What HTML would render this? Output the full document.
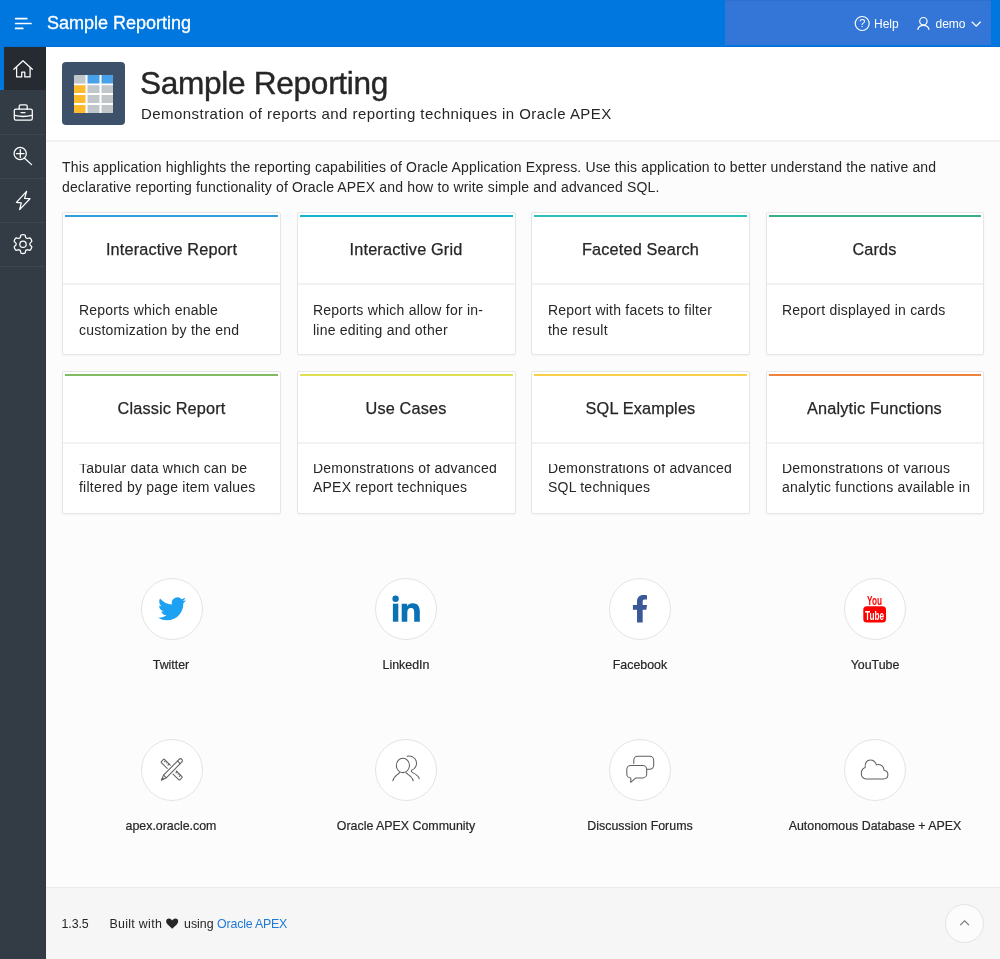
<!DOCTYPE html>
<html><head><meta charset="utf-8">
<style>
*{box-sizing:border-box;margin:0;padding:0}
html,body{width:1000px;height:959px;overflow:hidden}
#wrap{position:absolute;left:0;top:0;width:1000px;height:959px;will-change:transform}
body{position:relative;font-family:"Liberation Sans",sans-serif;background:#fcfcfc;color:#262626}
.abs{position:absolute}
#hdr{left:0;top:0;width:1000px;height:47px;background:#0076df}
#hdr .line{left:0;top:46px;width:1000px;height:1px;background:#006fd6}
#htitle{left:47px;top:12px;font-size:18px;line-height:22px;color:#fff;white-space:nowrap;-webkit-text-stroke:0.3px #fff}
#navbox{left:725px;top:0;width:266px;height:45px;background:#3476d8}
#navbox .top{left:0;top:0;width:266px;height:1px;background:#2f6fcc}
.nt{font-size:12px;line-height:14px;color:#fff;white-space:nowrap}
#side{left:0;top:47px;width:46px;height:912px;background:#333c45}
#side .it{position:absolute;left:0;width:45px;height:44px;border-bottom:1px solid #3e4751}
#side .edge{position:absolute;left:45px;top:43px;width:1px;height:869px;background:#2f373f}
#hero{left:46px;top:47px;width:954px;height:95px;background:#fff;border-bottom:2px solid #f0f0f0}
#hicon{left:62px;top:62px;width:63px;height:63px;background:#3e516b;border-radius:4px}
#ptitle{left:140px;top:65px;font-size:31.6px;line-height:36px;letter-spacing:-0.3px;-webkit-text-stroke:0.4px #262626;color:#262626;white-space:nowrap}
#psub{left:141px;top:104px;font-size:15px;line-height:19px;letter-spacing:0.45px;color:#262626;white-space:nowrap}
#intro{left:62px;top:156.5px;width:900px;font-size:14px;line-height:20px;letter-spacing:0.15px;color:#262626}
.card{position:absolute;width:219px;height:143px;background:#fff;border:1px solid #e6e6e6;border-radius:2px;box-shadow:0 1px 2px rgba(0,0,0,.04)}
.card .bar{position:absolute;left:2px;right:2px;top:2px;height:2px}
.card .ttl{position:absolute;left:0;right:0;top:26px;text-align:center;font-size:16.3px;line-height:20px;color:#262626;white-space:nowrap;letter-spacing:0.15px;-webkit-text-stroke:0.25px #262626}
.card .div{position:absolute;left:0;right:0;top:70px;height:2px;background:#f2f2f2}
.card .bd{position:absolute;left:16px;right:4px;top:88px;height:42px;overflow:hidden;font-size:14px;line-height:19.5px;letter-spacing:0.22px;color:#262626;white-space:nowrap}
.r2 .bd{top:92px;height:38px}
.c24 .bd{left:15px}
.c24 .ttl{left:-1px}
.r2 .bd span{display:block;margin-top:-5.5px}
.soc{position:absolute;width:234px;text-align:center}
.circ{position:absolute;width:62px;height:62px;border-radius:50%;background:#fff;border:1px solid #e3e3e3}
.lbl{position:absolute;width:234px;text-align:center;font-size:12.4px;line-height:14px;color:#262626;white-space:nowrap;-webkit-text-stroke:0.2px #262626}
#foot{left:46px;top:887px;width:954px;height:72px;background:#f6f6f6;border-top:1px solid #ebebeb}
.ft{font-size:12.4px;line-height:14px;color:#262626;white-space:nowrap}
</style></head><body><div id="wrap">

<!-- header -->
<div id="hdr" class="abs"><div class="line abs"></div></div>
<svg class="abs" style="left:0;top:0" width="46" height="47" viewBox="0 0 46 47">
 <g stroke="#fff" stroke-width="1.7" stroke-linecap="round" fill="none">
  <path d="M15.6 18.6H26.8M15.6 23.5H31M15.6 28.4H22.8"/>
 </g>
</svg>
<div id="htitle" class="abs">Sample Reporting</div>
<div id="navbox" class="abs"><div class="top abs"></div></div>
<svg class="abs" style="left:840px;top:0" width="160" height="47" viewBox="840 0 160 47">
 <g stroke="#fff" fill="none" stroke-width="1.2">
  <circle cx="862.2" cy="23.5" r="7.0"/>
  <circle cx="923.4" cy="21.2" r="3.7"/>
  <path d="M917.7 29.8C918.2 27.2 920.4 25.4 923.4 25.4S928.6 27.2 929.1 29.8"/>
  <path d="M971.8 21.8l4.4 4.4 4.4-4.4" stroke-width="1.3"/>
 </g>
 <text x="862.2" y="27.4" font-family="Liberation Sans" font-size="11" fill="#fff" text-anchor="middle">?</text>
</svg>
<div class="abs nt" style="left:874px;top:17px">Help</div>
<div class="abs nt" style="left:935.5px;top:17px">demo</div>

<!-- sidebar -->
<div id="side" class="abs">
 <div class="it" style="top:0;width:46px;height:43px;background:#262b31;border-bottom:0;box-shadow:inset 4px 0 0 #0076df"></div>
 <div class="it" style="top:44px"></div>
 <div class="it" style="top:88px"></div>
 <div class="it" style="top:132px"></div>
 <div class="it" style="top:176px"></div>
 <div class="edge"></div>
</div>
<svg class="abs" style="left:0;top:0" width="46" height="270" viewBox="0 0 46 270">
 <g stroke="#fff" fill="none" stroke-width="1.25" stroke-linejoin="round" stroke-linecap="round">
  <!-- home -->
  <path d="M13.9 69.3L23 60.7L32.3 69.3"/>
  <path d="M16.6 67.2V76.9H21.7V72.2H24.8V76.9H30.1V67.2"/>
  <!-- briefcase -->
  <path d="M19.2 109V106.2a1.4 1.4 0 0 1 1.4-1.4H25.8a1.4 1.4 0 0 1 1.4 1.4V109"/>
  <rect x="14.3" y="109" width="18" height="11.2" rx="1.6"/>
  <path d="M14.5 115.4Q23.2 117.6 32 115.4"/>
  <path d="M21 112.5H25"/>
  <!-- magnifier -->
  <circle cx="20.2" cy="153.5" r="6.1"/>
  <path d="M16.4 153.6H24M20.3 149.6V157.6M24.6 158.2L31.6 164.6"/>
  <!-- bolt -->
  <path d="M26.6 191.3L16.4 202.3L21.3 202.9L19.6 209.6L30 198.7L24.6 198.3Z"/>
  <!-- gear -->
  <path d="M20.19 237.80 L20.97 235.02 Q23.00 234.20 25.03 235.02 L25.81 237.80 A6.90 6.90 0 0 1 27.05 238.51 L29.85 237.80 Q31.57 239.15 31.87 241.32 L29.86 243.39 A6.90 6.90 0 0 1 29.86 244.81 L31.87 246.88 Q31.57 249.05 29.85 250.40 L27.05 249.69 A6.90 6.90 0 0 1 25.81 250.40 L25.03 253.18 Q23.00 254.00 20.97 253.18 L20.19 250.40 A6.90 6.90 0 0 1 18.95 249.69 L16.15 250.40 Q14.43 249.05 14.13 246.88 L16.14 244.81 A6.90 6.90 0 0 1 16.14 243.39 L14.13 241.32 Q14.43 239.15 16.15 237.80 L18.95 238.51 A6.90 6.90 0 0 1 20.19 237.80Z"/>
  <circle cx="23" cy="244.2" r="3.2"/>
 </g>
</svg>

<!-- hero -->
<div id="hero" class="abs"></div>
<div id="hicon" class="abs">
 <svg width="63" height="63" viewBox="62 62 63 63" style="position:absolute;left:0;top:0">
   <rect x="74" y="75" width="39" height="38" rx="1.6" fill="#fff"/>
   <path fill="#c1c6ca" d="M75.6 75H85.5V83.5H74V76.6A1.6 1.6 0 0 1 75.6 75Z"/>
   <path fill="#48a0e8" d="M87.5 75H99.5V83.5H87.5Z M101.5 75H111.4A1.6 1.6 0 0 1 113 76.6V83.5H101.5Z"/>
   <path fill="#fdbb2d" d="M74 85.3H85.5V93H74Z M74 95H85.5V103H74Z M74 105H85.5V113H75.6A1.6 1.6 0 0 1 74 111.4Z"/>
   <path fill="#c1c6ca" d="M87.5 85.3H99.5V93H87.5Z M101.5 85.3H113V93H101.5Z M87.5 95H99.5V103H87.5Z M101.5 95H113V103H101.5Z M87.5 105H99.5V113H87.5Z M101.5 105H113V111.4A1.6 1.6 0 0 1 111.4 113H101.5Z"/>
 </svg>
</div>
<div id="ptitle" class="abs">Sample Reporting</div>
<div id="psub" class="abs">Demonstration of reports and reporting techniques in Oracle APEX</div>

<!-- intro -->
<div id="intro" class="abs">This application highlights the reporting capabilities of Oracle Application Express. Use this application to better understand the native and<br>declarative reporting functionality of Oracle APEX and how to write simple and advanced SQL.</div>

<!-- cards -->
<div class="card" style="left:62px;top:212px"><div class="bar" style="background:#309fdb"></div><div class="ttl">Interactive Report</div><div class="div"></div><div class="bd">Reports which enable<br>customization by the end</div></div>
<div class="card c24" style="left:297px;top:212px"><div class="bar" style="background:#13b6cf"></div><div class="ttl">Interactive Grid</div><div class="div"></div><div class="bd">Reports which allow for in-<br>line editing and other</div></div>
<div class="card" style="left:531px;top:212px"><div class="bar" style="background:#2ebfbc"></div><div class="ttl">Faceted Search</div><div class="div"></div><div class="bd">Report with facets to filter<br>the result</div></div>
<div class="card c24" style="left:766px;top:212px;width:218px"><div class="bar" style="background:#3caf85"></div><div class="ttl">Cards</div><div class="div"></div><div class="bd">Report displayed in cards</div></div>

<div class="card r2" style="left:62px;top:371px"><div class="bar" style="background:#81bb5f"></div><div class="ttl">Classic Report</div><div class="div"></div><div class="bd"><span>Tabular data which can be<br>filtered by page item values</span></div></div>
<div class="card c24 r2" style="left:297px;top:371px"><div class="bar" style="background:#dde053"></div><div class="ttl">Use Cases</div><div class="div"></div><div class="bd"><span>Demonstrations of advanced<br>APEX report techniques</span></div></div>
<div class="card r2" style="left:531px;top:371px"><div class="bar" style="background:#fbce4a"></div><div class="ttl">SQL Examples</div><div class="div"></div><div class="bd"><span>Demonstrations of advanced<br>SQL techniques</span></div></div>
<div class="card c24 r2" style="left:766px;top:371px;width:218px"><div class="bar" style="background:#ed813e"></div><div class="ttl">Analytic Functions</div><div class="div"></div><div class="bd"><span>Demonstrations of various<br>analytic functions available in</span></div></div>

<!-- social -->
<div class="circ" style="left:141px;top:578px"></div>
<div class="circ" style="left:375px;top:578px"></div>
<div class="circ" style="left:609px;top:578px"></div>
<div class="circ" style="left:844px;top:578px"></div>
<div class="circ" style="left:141px;top:739px"></div>
<div class="circ" style="left:375px;top:739px"></div>
<div class="circ" style="left:609px;top:739px"></div>
<div class="circ" style="left:844px;top:739px"></div>

<div class="lbl" style="left:54px;top:658px">Twitter</div>
<div class="lbl" style="left:289px;top:658px">LinkedIn</div>
<div class="lbl" style="left:523px;top:658px">Facebook</div>
<div class="lbl" style="left:758px;top:658px">YouTube</div>
<div class="lbl" style="left:54px;top:819px">apex.oracle.com</div>
<div class="lbl" style="left:289px;top:819px">Oracle APEX Community</div>
<div class="lbl" style="left:523px;top:819px">Discussion Forums</div>
<div class="lbl" style="left:758px;top:819px">Autonomous Database + APEX</div>

<svg class="abs" style="left:0;top:560px" width="1000" height="260" viewBox="0 560 1000 260">
 <!-- twitter -->
 <path transform="translate(158.1,594.8) scale(1.17)" fill="#1da1f2" d="M23.953 4.57a10 10 0 01-2.825.775 4.958 4.958 0 002.163-2.723c-.951.555-2.005.959-3.127 1.184a4.92 4.92 0 00-8.384 4.482C7.69 8.095 4.067 6.13 1.64 3.162a4.822 4.822 0 00-.666 2.475c0 1.71.87 3.213 2.188 4.096a4.904 4.904 0 01-2.228-.616v.06a4.923 4.923 0 003.946 4.827 4.996 4.996 0 01-2.212.085 4.936 4.936 0 004.604 3.417 9.867 9.867 0 01-6.102 2.105c-.39 0-.779-.023-1.17-.067a13.995 13.995 0 007.557 2.209c9.053 0 13.998-7.496 13.998-13.985 0-.21 0-.42-.015-.63A9.935 9.935 0 0024 4.59z"/>
 <!-- linkedin -->
 <g fill="#0a71b5">
  <circle cx="395.6" cy="598.8" r="3.2"/>
  <rect x="392.9" y="603.7" width="5.4" height="18"/>
  <path d="M401.7 603.7H407.1V606.2C408.1 604.4 410 603.2 412.6 603.2C417.8 603.2 419.8 606.4 419.8 611.6V621.7H414.2V612.6C414.2 610.2 413.6 608.1 410.9 608.1C408.3 608.1 407.3 610.2 407.3 612.7V621.7H401.7Z"/>
 </g>
 <!-- facebook -->
 <path fill="#3b5998" d="M637 622.5V609.8H632.9V605H637V601.6C637 597.4 639.4 595 643.3 595C645 595 646.3 595.1 647 595.2V599.6H644.6C643.1 599.6 642.7 600.3 642.7 601.8V605H647L646.4 609.8H642.7V622.5Z"/>
 <!-- youtube -->
 <g>
  <text x="874.6" y="604.6" font-family="Liberation Sans" font-size="12" font-weight="bold" fill="#f00" text-anchor="middle" textLength="15" lengthAdjust="spacingAndGlyphs">You</text>
  <rect x="863.3" y="606.2" width="22.7" height="16.3" rx="3.5" fill="#f00"/>
  <text x="874.6" y="619.8" font-family="Liberation Sans" font-size="12.5" font-weight="bold" fill="#fff" text-anchor="middle" textLength="19" lengthAdjust="spacingAndGlyphs">Tube</text>
 </g>
 <g stroke="#606060" fill="none" stroke-width="1.05" stroke-linejoin="round" stroke-linecap="round">
  <!-- ruler -->
  <g transform="translate(171.65,769.6) rotate(44.5)">
   <rect x="-13" y="-2.2" width="26" height="4.4" rx="0.7"/>
   <path d="M-10.6 -2.2V-0.6M-8.2 -2.2V-1.2M-5.8 -2.2V-0.6M5.4 -2.2V-0.6M7.8 -2.2V-1.2M10.2 -2.2V-0.6"/>
  </g>
  <!-- pencil -->
  <g transform="translate(171.65,769.6) rotate(-45.5)">
   <path d="M-9.6 -1.9H12.6A1.9 1.9 0 0 1 12.6 1.9H-9.6L-14.6 0.1Z" stroke="#fcfcfc" stroke-width="3.4" fill="#fff"/>
   <path d="M-9.6 -1.9H12.6A1.9 1.9 0 0 1 12.6 1.9H-9.6L-14.6 0.1Z" fill="#fff"/>
   <path d="M-9.6 -1.9V1.9M10.2 -1.9V1.9M-14.6 0.1L-12.4 -0.7V0.9Z"/>
  </g>
  <!-- people -->
  <ellipse cx="402.9" cy="765.4" rx="6.6" ry="7.2"/>
  <path d="M392.9 780.8C393.5 776.2 397.6 775 399.6 772.7M405.9 772.7C408 775 412.4 776 413.2 780.8"/>
  <path d="M407.2 756.3A7.2 7.2 0 0 1 411.4 770.2Q411 771.6 412.6 772.6C415.4 774 418.6 775.4 419.2 778.7"/>
  <!-- chat -->
  <path d="M633.8 763.6V760.3a4 4 0 0 1 4-4H649.7a4 4 0 0 1 4 4V765.2a4 4 0 0 1 -4 4H647.2"/>
  <path d="M630.8 777.9a4 4 0 0 1 -4-4V769.4a4 4 0 0 1 4-4H642.7a4 4 0 0 1 4 4V773.9a4 4 0 0 1 -4 4H635.8L630.8 782.3Z"/>
  <!-- cloud -->
  <path d="M866 779H883.6C886.2 779 887.9 777 887.9 774.6C887.9 772.3 886.2 770.5 884 770.4C884 767 881.6 764.4 878.6 764.4C877.8 764.4 877.1 764.6 876.5 764.9C875.4 761.9 873.2 760 870.4 760C866.7 760 864.6 763.3 865.2 767.4C862.9 768.2 861.3 770.6 861.3 773.4C861.3 776.6 863.4 779 866 779Z"/>
 </g>
</svg>

<!-- footer -->
<div id="foot" class="abs"></div>
<div class="abs ft" style="left:61.5px;top:917px;letter-spacing:-0.1px">1.3.5</div>
<div class="abs ft" style="left:109.5px;top:917px;letter-spacing:0.3px">Built with</div>
<svg class="abs" style="left:160px;top:910px" width="30" height="25" viewBox="160 910 30 25">
 <path fill="#262626" d="M172.2 928.8L167.4 924.2C165.4 922.3 165.9 918.6 169 918.6C170.6 918.6 171.6 919.6 172.2 920.6C172.8 919.6 173.8 918.6 175.4 918.6C178.5 918.6 179 922.3 177 924.2Z"/>
</svg>
<div class="abs ft" style="left:184px;top:917px">using <span style="color:#1f7ad6;letter-spacing:-0.2px">Oracle APEX</span></div>
<div class="abs" style="left:945px;top:904px;width:39px;height:39px;border-radius:50%;background:#fcfcfc;border:1px solid #e3e3e3"></div>
<svg class="abs" style="left:945px;top:904px" width="39" height="39" viewBox="945 904 39 39">
 <path d="M960.2 925.2L964.6 920.8L969 925.2" stroke="#777" stroke-width="1.2" fill="none"/>
</svg>

</div></body></html>
